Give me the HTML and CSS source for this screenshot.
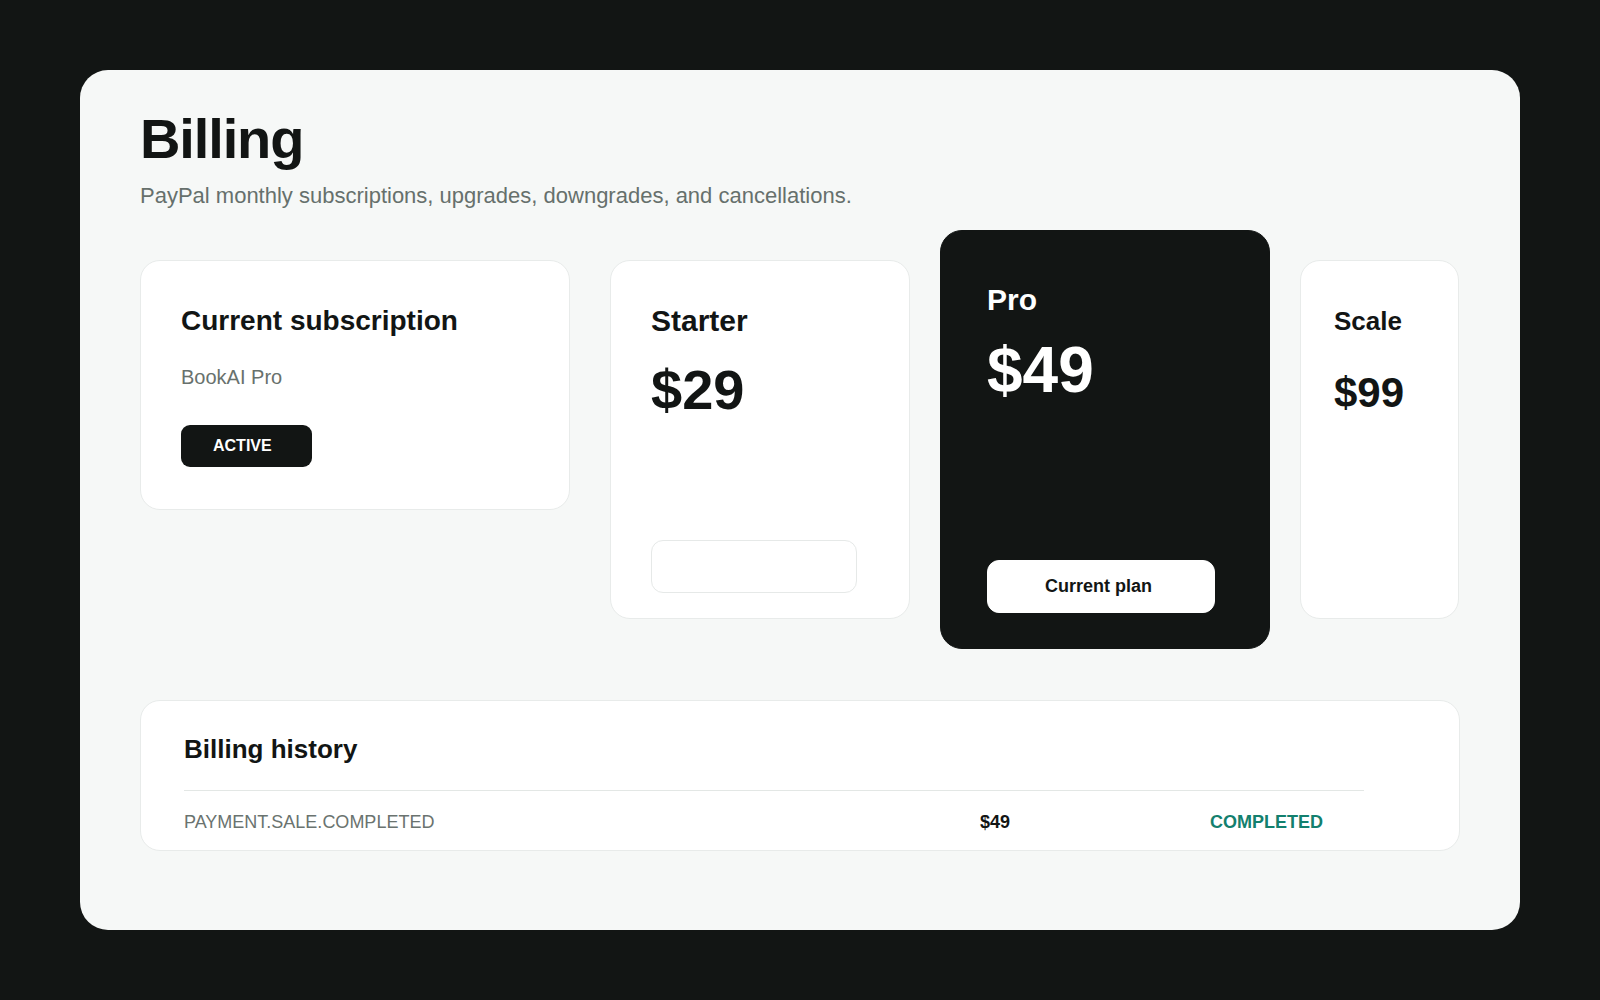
FILE: index.html
```html
<!DOCTYPE html>
<html lang="en">
<head>
    <meta charset="UTF-8">
    <meta name="viewport" content="width=device-width, initial-scale=1.0">
    <title>Billing</title>
    <link rel="stylesheet" href="styles.css">
</head>
<body>
    <main class="billing">
        <header class="billing-head">
            <h1>Billing</h1>
            <p class="lead">PayPal monthly subscriptions, upgrades, downgrades, and cancellations.</p>
        </header>

        <!-- Subscription + plans -->
        <section class="overview">
            <div class="card sub-card">
                <h3>Current subscription</h3>
                <p class="sub-plan">BookAI Pro</p>
                <span class="badge">ACTIVE</span>
            </div>

            <div class="plans">
                <div class="plan plan-starter">
                    <h3>Starter</h3>
                    <div class="price">$29</div>
                    <button class="plan-btn"></button>
                </div>
                <div class="plan plan-pro">
                    <h3>Pro</h3>
                    <div class="price">$49</div>
                    <button class="plan-btn">Current plan</button>
                </div>
                <div class="plan plan-scale">
                    <h3>Scale</h3>
                    <div class="price">$99</div>
                </div>
            </div>
        </section>

        <!-- Billing history -->
        <section class="card history">
            <h3>Billing history</h3>
            <div class="history-row">
                <span class="event">PAYMENT.SALE.COMPLETED</span>
                <span class="amount">$49</span>
                <span class="status">COMPLETED</span>
            </div>
        </section>
    </main>
</body>
</html>
```

FILE: styles.css
```css
body {
    margin: 0;
    padding: 70px 80px;
    background-color: #121514;
    color: #121514;
    font-family: "Liberation Sans", Arial, sans-serif;
}

.billing {
    box-sizing: border-box;
    height: 860px;
    padding: 40px 60px 0;
    background-color: #f6f8f7;
    border-radius: 28px;
}

h1 {
    margin: 0;
    font-size: 56px;
    line-height: 1.05;
    letter-spacing: -0.02em;
}

h3 {
    margin: 0;
    font-size: 28px;
    line-height: 1.4;
}

.lead {
    margin: 10px 0 0;
    font-size: 22px;
    line-height: 1.5;
    color: #66706c;
}

.card {
    background-color: #fff;
    border: 1px solid #e8ebea;
    border-radius: 20px;
}

.overview {
    display: flex;
    align-items: flex-start;
    gap: 40px;
    margin-top: 18px;
}

.sub-card {
    box-sizing: border-box;
    flex-shrink: 0;
    width: 430px;
    margin-top: 30px;
    padding: 40px 40px 42px;
}

.sub-card h3 {
    margin-bottom: 22px;
}

.sub-plan {
    margin: 0 0 33px;
    font-size: 20px;
    line-height: 1.5;
    color: #68716d;
}

.badge {
    display: block;
    width: fit-content;
    padding: 12px 40px 12px 32px;
    background-color: #121514;
    color: #fff;
    font-size: 16px;
    font-weight: 700;
    line-height: 18px;
    border-radius: 9px;
}

.plans {
    display: flex;
    align-items: center;
    gap: 30px;
}

.plan {
    box-sizing: border-box;
    flex-shrink: 0;
    display: flex;
    flex-direction: column;
    align-items: flex-start;
    background-color: #fff;
    border: 1px solid #e8ebea;
    border-radius: 20px;
}

.plan h3 {
    font-size: 30px;
}

.price {
    margin-top: 14px;
    font-size: 56px;
    font-weight: 700;
    line-height: 1.2;
}

.plan-btn {
    margin-top: auto;
    height: 53px;
    padding: 0;
    background-color: #fff;
    border: 1px solid #e6e9e8;
    border-radius: 12px;
    color: #121514;
    font: inherit;
    font-size: 18px;
    font-weight: 700;
    cursor: pointer;
}

.plan-starter {
    width: 300px;
    height: 359px;
    padding: 39px 0 25px 40px;
}

.plan-starter .plan-btn {
    width: 206px;
}

.plan-pro {
    width: 330px;
    height: 419px;
    padding: 48px 0 35px 46px;
    background-color: #121514;
    border-color: #121514;
    border-radius: 22px;
    color: #fff;
}

.plan-pro .price {
    margin-top: 11px;
    font-size: 64px;
}

.plan-pro .plan-btn {
    width: 228px;
    padding-right: 5px;
    border-color: #fff;
}

.plan-scale {
    width: 159px;
    height: 359px;
    padding: 42px 0 0 33px;
}

.plan-scale h3 {
    font-size: 26px;
}

.plan-scale .price {
    margin-top: 29px;
    font-size: 42px;
}

.history {
    margin-top: 51px;
    padding: 30px 95px 1px 43px;
}

.history h3 {
    font-size: 26px;
}

.history-row {
    display: grid;
    grid-template-columns: 796px 230px 1fr;
    margin-top: 23px;
    padding: 18px 0 13px;
    border-top: 1px solid #e3e7e5;
    font-size: 18px;
    line-height: 1.5;
}

.event {
    color: #6a736f;
}

.amount {
    font-weight: 700;
}

.status {
    font-weight: 700;
    color: #13806e;
}
```
